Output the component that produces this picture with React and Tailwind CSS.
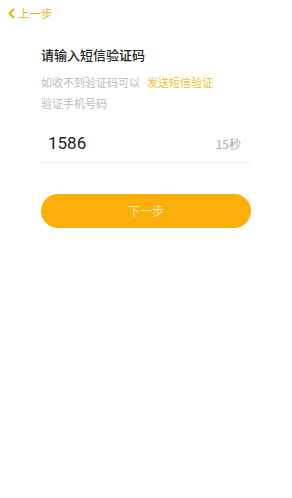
import React from 'react';

const font = { fontFamily: '"Noto Sans CJK SC", "Noto Sans", sans-serif' };

export default function App() {
  return (
    <div className="w-[292px] h-[498px] bg-white" style={font}>
      <div className="flex items-center h-[26px] pl-[7px] pt-[1px] text-[#e8b021]">
        <svg width="9" height="11" viewBox="0 0 9 11" fill="none">
          <path d="M6.5 1.5L2.5 5.5L6.5 9.5" stroke="currentColor" strokeWidth="2" strokeLinecap="round" strokeLinejoin="round" />
        </svg>
        <span className="ml-[2px] text-[11.5px] leading-none">上一步</span>
      </div>

      <div className="px-[41px] pt-[20px]">
        <div className="text-[13px] leading-[18px] font-medium text-[#222]">请输入短信验证码</div>
        <div className="mt-[11px] flex text-[11px] leading-[14px] text-[#bbbbbb]">
          <span>如收不到验证码可以</span>
          <span className="ml-[7px] text-[#ecc12e]">发送短信验证</span>
        </div>
        <div className="mt-[7px] text-[11px] leading-[14px] text-[#bbbbbb]">验证手机号码</div>

        <div className="mt-[16px] flex items-center justify-between pl-[7px] pr-[10px] h-[37px] border-b border-[#f0f0f0]">
          <span className="text-[17px] text-[#222]" style={{ fontFamily: 'Roboto, "Noto Sans", sans-serif' }}>1586</span>
          <span className="text-[12px] text-[#aaaaaa]">15秒</span>
        </div>

        <button className="mt-[31px] w-full h-[34px] rounded-full bg-[#fcae0a] text-[12px] text-[#fde9b8]">
          下一步
        </button>
      </div>
    </div>
  );
}
